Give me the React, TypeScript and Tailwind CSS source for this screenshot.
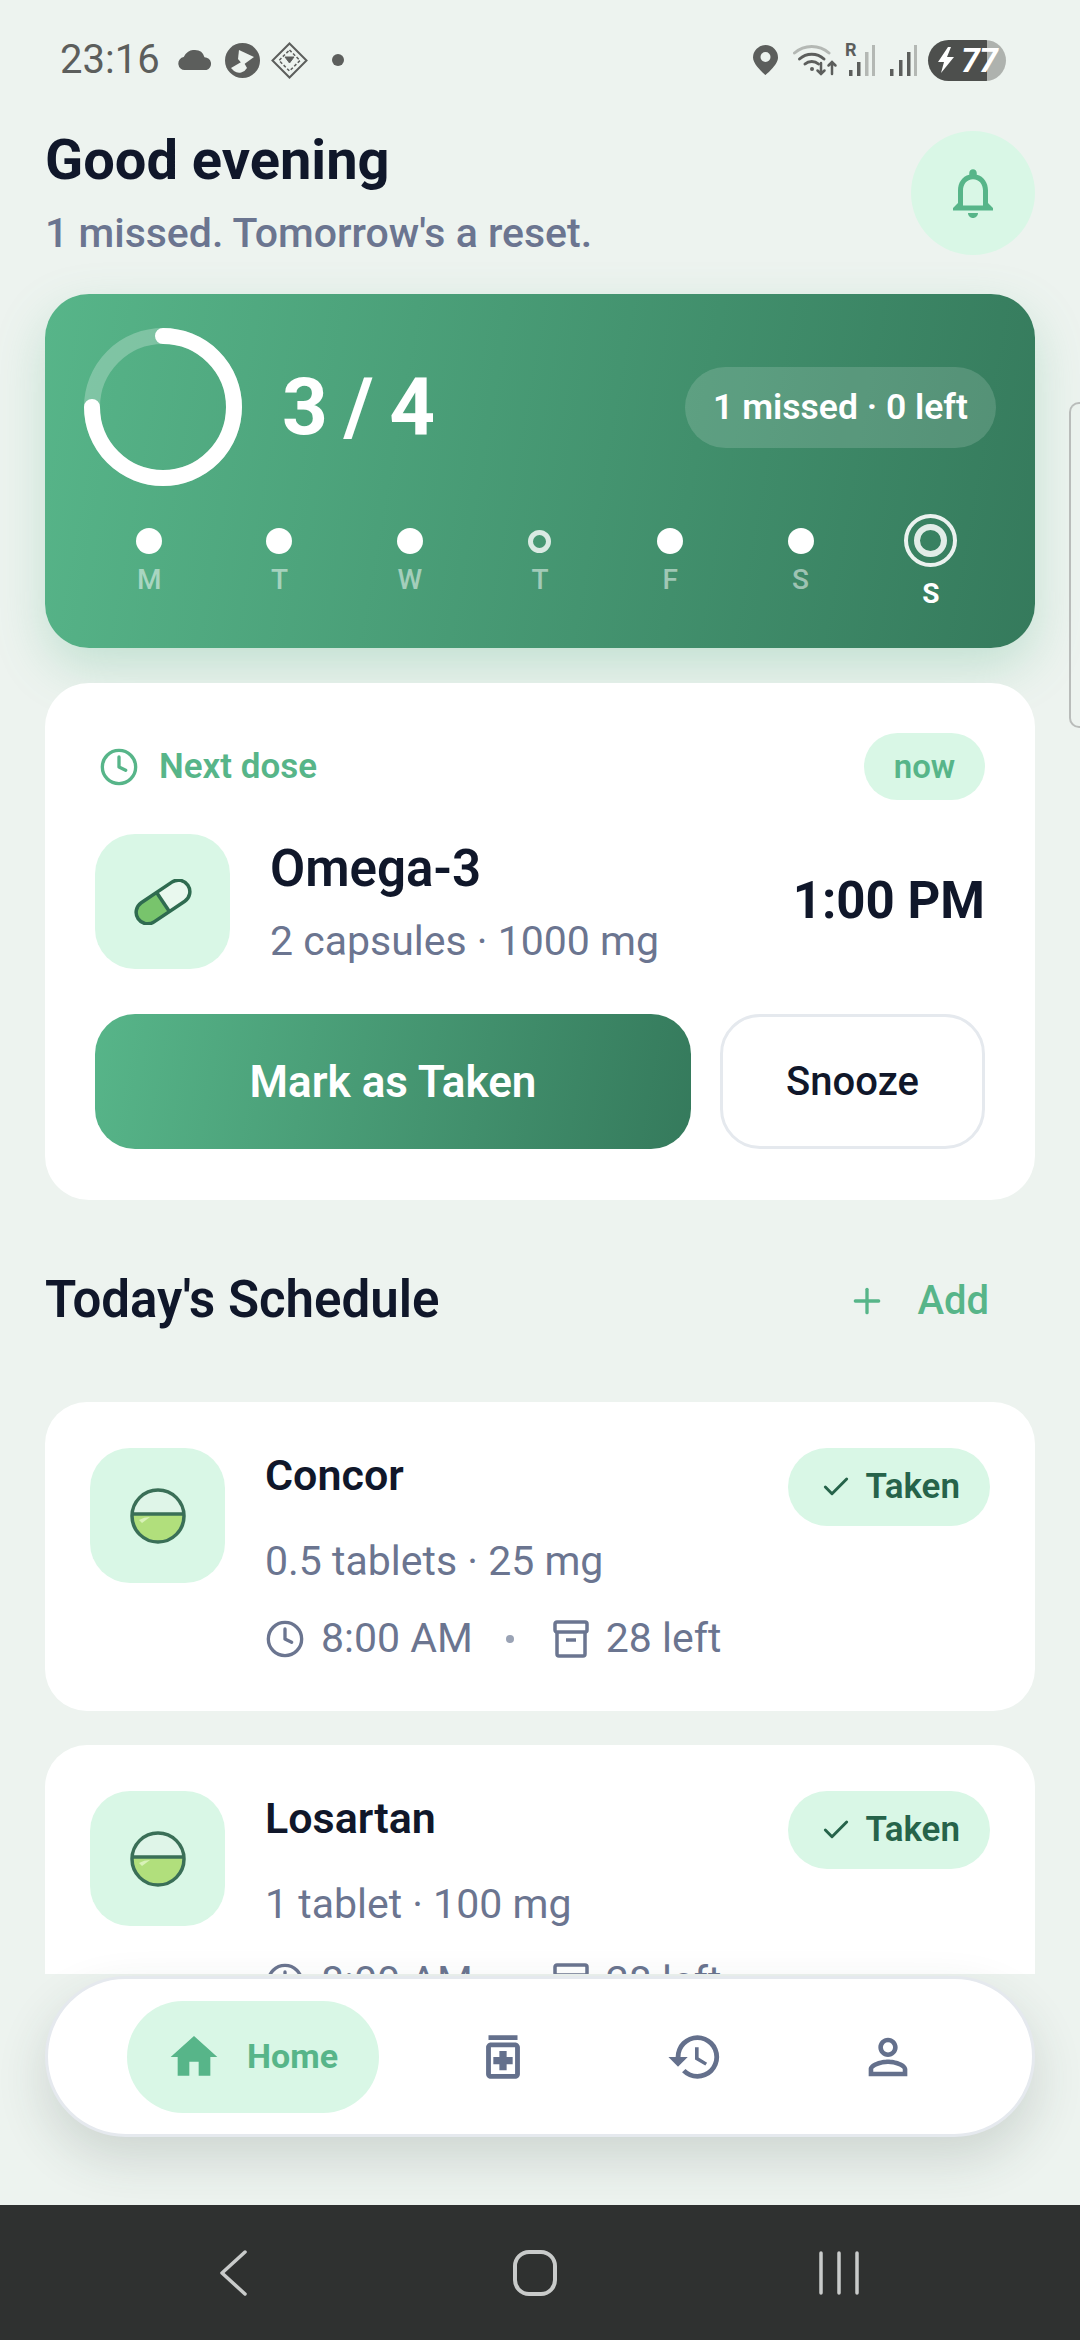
import { Check, Clock, Plus } from "lucide-react";
import { MdHistory, MdHome, MdOutlineMedication, MdOutlineNotifications, MdPersonOutline } from "react-icons/md";

const days = [
  { label: "M", state: "done" },
  { label: "T", state: "done" },
  { label: "W", state: "done" },
  { label: "T", state: "missed" },
  { label: "F", state: "done" },
  { label: "S", state: "done" },
  { label: "S", state: "today" },
];

function StatusBar() {
  return (
    <div className="flex h-[118px] shrink-0 items-center justify-between pl-[60px] pr-[74px] pt-[2px] text-[#5c5e5c]">
      <div className="flex items-center">
        <span className="text-[40px] leading-none">23:16</span>
        <svg className="ml-[18px]" width="35" height="20" viewBox="0 0 35 20" fill="currentColor">
          <path d="M7 20a6.5 6.5 0 0 1-1.300-12.900A11 11 0 0 1 17 0a10 10 0 0 1 9.500 7.300A6.500 6.500 0 0 1 28.500 20Z" />
        </svg>
        <svg className="ml-[12px]" width="35" height="35" viewBox="0 0 35 35">
          <circle cx="17.500" cy="17.500" r="17.500" fill="currentColor" />
          <path d="M14 7 29 14 18 22 13 16Z" fill="#edf3ef" />
          <path d="M6 25 18 18 22 25A9 9 0 0 1 9 28Z" fill="#edf3ef" />
        </svg>
        <svg className="ml-[11px]" width="37" height="37" viewBox="0 0 37 37" fill="none" stroke="currentColor">
          <path d="M18.500 1.500 35.500 18.500 18.500 35.500 1.500 18.500Z" strokeWidth="2" />
          <path d="M18.500 8 29 18.500 18.500 29 8 18.500Z" strokeWidth="1.500" strokeDasharray="3 2" />
          <path d="M14 15h9l-4.500 6Z" fill="currentColor" />
        </svg>
        <span className="ml-[24px] h-[12px] w-[12px] rounded-full bg-current" />
      </div>
      <div className="flex items-center">
        <svg width="25" height="30" viewBox="0 0 25 30">
          <path d="M12.500 0A12.500 12.500 0 0 0 0 12.500C0 20 12.500 30 12.500 30S25 20 25 12.500A12.500 12.500 0 0 0 12.500 0Z" fill="currentColor" />
          <circle cx="12.500" cy="12" r="5" fill="#edf3ef" />
        </svg>
        <svg className="ml-[15px]" width="45" height="32" viewBox="0 0 45 32" fill="none" strokeLinecap="round">
          <path d="M1.500 9A26 26 0 0 1 36 9" stroke="#b4b8b4" strokeWidth="3" />
          <path d="M6.500 15A18 18 0 0 1 31 15" stroke="#5c5e5c" strokeWidth="3" />
          <path d="M12 20A10 10 0 0 1 25.500 20" stroke="#5c5e5c" strokeWidth="3" />
          <circle cx="19" cy="25" r="2" fill="#5c5e5c" />
          <path d="M28 19v11m-3.500-3.500L28 30l3.500-3.500M39 30V18m-3.500 3.500L39 18l3.500 3.500" stroke="#5c5e5c" strokeWidth="2.500" />
        </svg>
        <div className="relative ml-[7px] h-[32px] w-[30px]">
          <span className="absolute left-0 top-[-3px] text-[18px] font-bold leading-none">R</span>
          <svg className="absolute left-0 top-0" width="30" height="32" viewBox="0 0 30 32">
            <rect x="4" y="26" width="3.500" height="6" fill="#5c5e5c" />
            <rect x="12" y="18" width="3.500" height="14" fill="#5c5e5c" />
            <rect x="20" y="8" width="3.500" height="24" fill="#b4b8b4" />
            <rect x="27" y="1" width="3" height="31" fill="#b4b8b4" />
          </svg>
        </div>
        <svg className="ml-[15px]" width="27" height="32" viewBox="0 0 27 32">
          <rect x="0" y="25" width="3.500" height="7" fill="#5c5e5c" />
          <rect x="9" y="16" width="3.500" height="16" fill="#5c5e5c" />
          <rect x="17" y="8" width="3.500" height="24" fill="#5c5e5c" />
          <rect x="24" y="1" width="3" height="31" fill="#b4b8b4" />
        </svg>
        <div className="ml-[11px] flex h-[41px] w-[78px] items-center rounded-full bg-[linear-gradient(90deg,#4d4f4d_76%,#aeb2ae_76%)] pl-[10px]">
          <svg width="16" height="26" viewBox="0 0 16 26" fill="white">
            <path d="M10 0 0 15h6l-3 11 13-16H9l4-10Z" />
          </svg>
          <span className="ml-[7px] text-[34px] font-bold italic leading-none tracking-[-1px] text-white">77</span>
        </div>
      </div>
    </div>
  );
}

function ProgressRing() {
  return (
    <svg width="158" height="158" viewBox="0 0 158 158" className="shrink-0">
      <circle cx="79" cy="79" r="71" fill="none" stroke="white" strokeOpacity="0.25" strokeWidth="16" />
      <path d="M79 8A71 71 0 1 1 8 79" fill="none" stroke="white" strokeWidth="16" strokeLinecap="round" />
    </svg>
  );
}

function CapsuleIcon() {
  return (
    <svg width="58" height="46" viewBox="0 0 58 46">
      <g transform="rotate(-34 29 23)">
        <rect x="-1" y="11.500" width="60" height="23" rx="11.500" fill="#e9f8ee" />
        <path d="M29 11.500H10.500A11.500 11.500 0 0 0 10.500 34.500H29Z" fill="#78c46c" />
        <path d="M29 11v24" stroke="#2f6b50" strokeWidth="3.500" />
        <rect x="-1" y="11.500" width="60" height="23" rx="11.500" fill="none" stroke="#2f6b50" strokeWidth="3.500" />
      </g>
    </svg>
  );
}

function HalfTablet() {
  return (
    <svg width="56" height="56" viewBox="0 0 56 56">
      <circle cx="28" cy="28" r="26" fill="#dff5e8" />
      <path d="M2 27H54A26 26 0 0 1 2 27Z" fill="#b1df7c" />
      <path d="M9 32Q14 29 20 29L12 35Z" fill="#d9f2b8" />
      <circle cx="28" cy="28" r="26" fill="none" stroke="#3a6f57" strokeWidth="3.500" />
      <path d="M2 26H54" stroke="#3a6f57" strokeWidth="3.500" />
    </svg>
  );
}

function BoxIcon() {
  return (
    <svg width="36" height="38" viewBox="0 0 36 38" fill="none" stroke="#6b7590" strokeWidth="3.500" strokeLinejoin="round">
      <rect x="2" y="2" width="32" height="10" rx="2" />
      <path d="M4 12v22a2 2 0 0 0 2 2h24a2 2 0 0 0 2-2V12" />
      <path d="M13 20h10" />
    </svg>
  );
}

function ScheduleCard({ name, dose, time, left }: { name: string; dose: string; time: string; left: string }) {
  return (
    <div className="flex rounded-[42px] bg-white pb-[48px] pl-[45px] pr-[45px] pt-[46px]">
      <div className="flex h-[135px] w-[135px] shrink-0 items-center justify-center rounded-[40px] bg-[#d9f7e6]">
        <HalfTablet />
      </div>
      <div className="ml-[40px] min-w-0 flex-1">
        <div className="flex items-start justify-between">
          <div className="text-[43px] font-semibold leading-[54px] text-[#10172a]">{name}</div>
          <div className="flex h-[78px] items-center gap-[14px] rounded-full bg-[#d9f7e6] pl-[32px] pr-[30px]">
            <Check size={32} strokeWidth={2.2} className="text-[#26634a]" />
            <span className="text-[35px] font-semibold text-[#26634a]">Taken</span>
          </div>
        </div>
        <div className="mt-[11px] text-[41px] leading-[48px] text-[#6b7590]">{dose}</div>
        <div className="mt-[30px] flex h-[48px] items-center text-[41px] text-[#6b7590]">
          <Clock size={40} strokeWidth={2} className="shrink-0" />
          <span className="ml-[16px]">{time}</span>
          <span className="ml-[33px] h-[8px] w-[8px] rounded-full bg-[#9aa3b5]" />
          <span className="ml-[39px] shrink-0"><BoxIcon /></span>
          <span className="ml-[17px]">{left}</span>
        </div>
      </div>
    </div>
  );
}

export default function App() {
  return (
    <div className="relative flex h-[2340px] w-[1080px] flex-col overflow-hidden bg-[#edf3ef] font-['Roboto',sans-serif]">
      <StatusBar />

      <div className="min-h-0 flex-1 overflow-hidden px-[45px] pt-[13px]">
        <header className="flex h-[124px] items-center justify-between">
          <div>
            <h1 className="text-[56px] font-bold leading-[60px] text-[#10172a]">Good evening</h1>
            <p className="mt-[19px] text-[41px] font-medium leading-[48px] text-[#6b7590]">1 missed. Tomorrow's a reset.</p>
          </div>
          <div className="flex h-[124px] w-[124px] items-center justify-center rounded-full bg-[#d9f7e6] text-[#57b589]">
            <MdOutlineNotifications size={60} />
          </div>
        </header>

        <section className="mt-[39px] rounded-[44px] bg-[linear-gradient(100deg,#57b589,#357a5c)] px-[39px] pb-[38px] pt-[34px] shadow-[0_20px_50px_rgba(87,181,137,0.28)]">
          <div className="flex items-center justify-between">
            <div className="flex items-center">
              <ProgressRing />
              <span className="ml-[40px] text-[80px] font-bold leading-none tracking-[-2px] text-white">3 / 4</span>
            </div>
            <div className="flex h-[81px] w-[311px] items-center justify-center rounded-full bg-white/15 pt-[2px] text-[35.500px] font-semibold text-white">1 missed · 0 left</div>
          </div>
          <div className="mt-[28px] flex items-center">
            {days.map((d, i) => (
              <div key={i} className="flex flex-1 flex-col items-center gap-[10px]">
                {d.state === "done" && <span className="h-[26px] w-[26px] rounded-full bg-white" />}
                {d.state === "missed" && (
                  <span className="my-[1.500px] h-[23px] w-[23px] rounded-full border-[5px] border-white/80" />
                )}
                {d.state === "today" && (
                  <span className="mb-[1px] flex h-[53px] w-[53px] items-center justify-center rounded-full border-[4px] border-white/90">
                    <span className="h-[33px] w-[33px] rounded-full border-[6px] border-white/85" />
                  </span>
                )}
                <span className={d.state === "today" ? "text-[28px] font-bold leading-[32px] text-white" : "text-[28px] font-medium leading-[32px] text-white/50"}>
                  {d.label}
                </span>
              </div>
            ))}
          </div>
        </section>

        <section className="mt-[35px] rounded-[44px] bg-white px-[50px] pb-[51px] pt-[50px]">
          <div className="flex h-[67px] items-center justify-between">
            <div className="flex items-center pl-[4px] text-[#57b589]">
              <Clock size={40} strokeWidth={2} />
              <span className="ml-[20px] pt-[2px] text-[35px] font-semibold">Next dose</span>
            </div>
            <span className="flex h-[67px] w-[121px] items-center justify-center rounded-full bg-[#d9f7e6] text-[33px] font-semibold text-[#57b589]">now</span>
          </div>
          <div className="mt-[34px] flex items-center">
            <div className="flex h-[135px] w-[135px] shrink-0 items-center justify-center rounded-[40px] bg-[#d9f7e6]">
              <CapsuleIcon />
            </div>
            <div className="ml-[40px] flex-1">
              <div className="text-[51px] font-semibold leading-[60px] text-[#10172a]">Omega-3</div>
              <div className="mt-[18px] text-[41px] leading-[48px] text-[#6b7590]">2 capsules · 1000 mg</div>
            </div>
            <div className="text-[51px] font-bold text-[#10172a]">1:00 PM</div>
          </div>
          <div className="mt-[45px] flex gap-[29px]">
            <button className="flex h-[135px] flex-1 items-center justify-center rounded-[40px] bg-[linear-gradient(100deg,#57b589,#357a5c)] text-[44px] font-semibold text-white">
              Mark as Taken
            </button>
            <button className="flex h-[135px] w-[265px] items-center justify-center rounded-[40px] border-[3px] border-[#e5e9ee] bg-white text-[40px] font-medium text-[#10172a]">
              Snooze
            </button>
          </div>
        </section>

        <div className="mt-[69px] flex h-[60px] items-center justify-between pr-[46px] pt-[3px]">
          <h2 className="text-[51px] font-semibold text-[#10172a]">Today's Schedule</h2>
          <div className="flex items-center text-[#57b589]">
            <Plus size={40} strokeWidth={2} />
            <span className="ml-[30px] text-[40px] font-medium">Add</span>
          </div>
        </div>

        <div className="mt-[73px] flex flex-col gap-[34px]">
          <ScheduleCard name="Concor" dose="0.5 tablets · 25 mg" time="8:00 AM" left="28 left" />
          <ScheduleCard name="Losartan" dose="1 tablet · 100 mg" time="8:00 AM" left="28 left" />
        </div>
      </div>

      <div className="h-[231px] shrink-0 px-[45px] pt-[2px]">
        <nav className="relative z-10 flex h-[161px] w-[990px] items-center rounded-full border-[3px] border-[#e5e9ee] bg-white pl-[79px] shadow-[0_22px_50px_rgba(45,65,55,0.16)]">
          <div className="flex h-[112px] w-[252px] items-center rounded-full bg-[#d9f7e6] pl-[45px] text-[#57b589]">
            <MdHome size={56} className="-ml-[6px]" />
            <span className="ml-[25px] text-[34px] font-bold">Home</span>
          </div>
          <MdOutlineMedication size={58} className="ml-[95px] text-[#64708c]" />
          <MdHistory size={58} className="ml-[134px] text-[#64708c]" />
          <MdPersonOutline size={58} className="ml-[135px] text-[#64708c]" />
        </nav>
      </div>

      <div className="flex h-[135px] shrink-0 items-center bg-[#2f3130] pl-[219px] text-[#c9cbca]">
        <svg width="28" height="46" viewBox="0 0 28 46" fill="none" stroke="currentColor" strokeWidth="3.500" strokeLinecap="round" strokeLinejoin="round">
          <path d="M26 2 3 23l23 21" />
        </svg>
        <svg className="ml-[266px]" width="44" height="46" viewBox="0 0 44 46" fill="none" stroke="currentColor" strokeWidth="4">
          <rect x="2" y="2" width="40" height="42" rx="14" />
        </svg>
        <svg className="ml-[262px]" width="40" height="44" viewBox="0 0 40 44" fill="none" stroke="currentColor" strokeWidth="3.500" strokeLinecap="round">
          <path d="M2 2v40M20 2v40M38 2v40" />
        </svg>
      </div>

      <div className="absolute right-0 top-[402px] h-[326px] w-[11px] rounded-l-[10px] border-y-2 border-l-2 border-[#b9bcba]" />
    </div>
  );
}
